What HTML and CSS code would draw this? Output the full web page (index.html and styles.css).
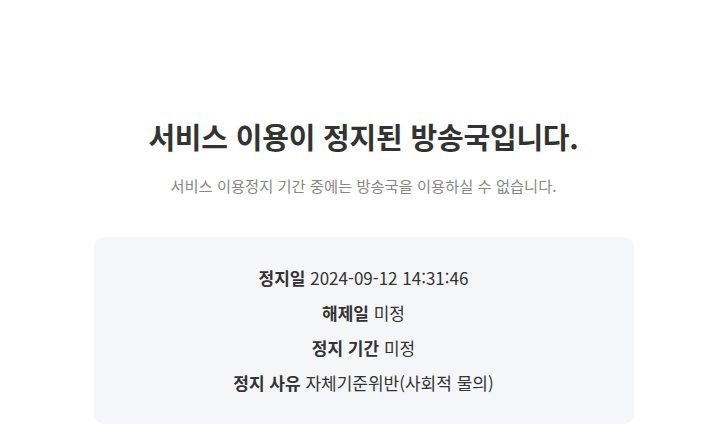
FILE: index.html
```html
<!DOCTYPE html>
<html lang="ko">
<head>
	<meta charset="UTF-8">
	<title>방송국 이용 정지</title>
	<link rel="stylesheet" href="styles.css">
</head>
<body>
	<div class="wrap">
		<h1 class="title">서비스 이용이 정지된 방송국입니다.</h1>
		<p class="desc">서비스 이용정지 기간 중에는 방송국을 이용하실 수 없습니다.</p>
		<div class="info">
			<p><b>정지일</b> 2024-09-12 14:31:46</p>
			<p><b>해제일</b> 미정</p>
			<p><b>정지 기간</b> 미정</p>
			<p><b>정지 사유</b> 자체기준위반(사회적 물의)</p>
		</div>
	</div>
</body>
</html>
```

FILE: styles.css
```css
*{padding: 0; margin: 0;}
body{background: #fff; color: #333; padding-left: 20px; font-family: "Noto Sans CJK KR", "Noto Sans", sans-serif;}
.wrap{width: 540px; margin: 0 auto; padding-top: 114px; text-align: center;}
.title{font-size: 29px; font-weight: 700; line-height: 44px; color: #333; letter-spacing: -0.2px;}
.desc{margin-top: 17px; font-size: 15.3px; line-height: 20px; color: #888;}
.info{margin-top: 42px; padding: 23px 0 24px; background: #f5f6f8; border-radius: 10px;}
.info p{font-size: 17px; line-height: 35px; color: #333;}
.info b{font-weight: 700; color: #333;}
```
